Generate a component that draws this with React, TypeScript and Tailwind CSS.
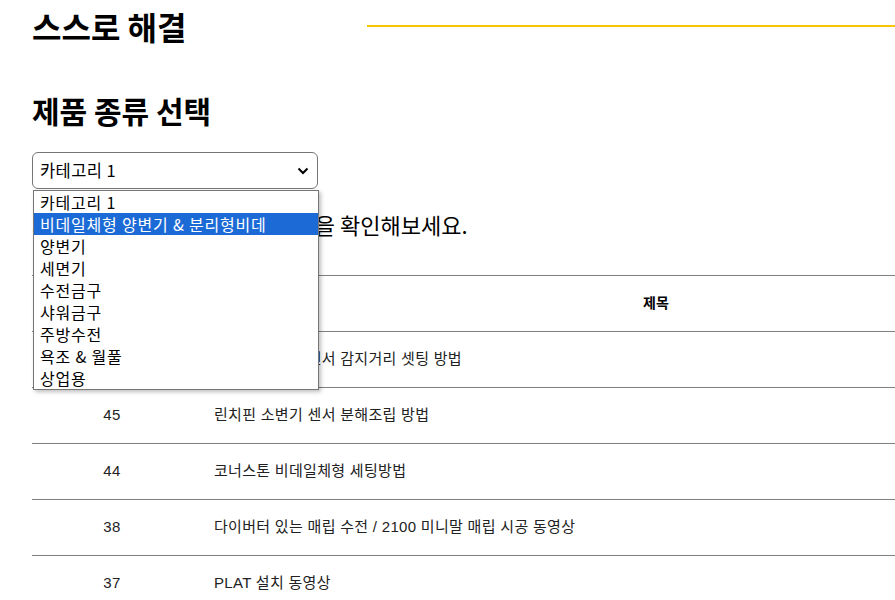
import React from 'react';

const OPTIONS = ['카테고리 1', '비데일체형 양변기 & 분리형비데', '양변기', '세면기', '수전금구', '샤워금구', '주방수전', '욕조 & 월풀', '상업용'];

const ROWS = [
  { no: 46, title: '린치핀 소변기 센서 감지거리 셋팅 방법' },
  { no: 45, title: '린치핀 소변기 센서 분해조립 방법' },
  { no: 44, title: '코너스톤 비데일체형 세팅방법' },
  { no: 38, title: '다이버터 있는 매립 수전 / 2100 미니말 매립 시공 동영상' },
  { no: 37, title: 'PLAT 설치 동영상' },
];

const kr = { fontFamily: '"Noto Sans CJK KR", sans-serif' };
const body = { fontFamily: '"Liberation Sans", "Noto Sans CJK KR", sans-serif' };

export default function App() {
  return (
    <div className="relative h-screen w-screen overflow-hidden bg-white text-black" style={kr}>
      <div className="pl-8">
        {/* page title */}
        <div className="flex items-center pt-[6px]">
          <h1 className="w-[335px] shrink-0 text-[32px] font-bold leading-[40px]">스스로 해결</h1>
          <div className="h-[2px] flex-1 bg-[#f7c600]" />
        </div>

        <h2 className="mt-[44px] text-[30px] font-bold leading-[40px]">제품 종류 선택</h2>

        <div className="mt-[22px] flex h-[37px] w-[286px] items-center justify-between rounded-md border border-[#767676] px-[7px] text-[16.5px] tracking-[0.4px]">
          <span>카테고리 1</span>
          <svg width="12" height="8" viewBox="0 0 12 8" className="mr-[1px]">
            <path d="M1.5 1.5 L6 6 L10.5 1.5" fill="none" stroke="#000" strokeWidth="2" />
          </svg>
        </div>

        <p className="mt-[20px] text-[22px] leading-[30px]">제품 종류를 선택하여 해결 방법을 확인해보세요.</p>

        <table className="mt-[36px] w-[1088px] border-collapse" style={body}>
          <thead>
            <tr className="h-[56px] border-y border-[#808080] text-[14px]">
              <th className="w-[160px] font-bold">번호</th>
              <th className="font-bold">제목</th>
            </tr>
          </thead>
          <tbody>
            {ROWS.map(r => (
              <tr key={r.no} className="h-[56px] border-b border-[#808080] text-[15px] tracking-[0.3px] text-[#222]">
                <td className="text-center">{r.no}</td>
                <td className="pl-[22px]">{r.title}</td>
              </tr>
            ))}
          </tbody>
        </table>
      </div>

      {/* open select list */}
      <div className="absolute left-[33px] top-[190px] w-[286px] border border-[#767676] bg-white text-[16px] tracking-[0.8px] shadow-[2px_2px_4px_rgba(0,0,0,0.25)]">
        {OPTIONS.map((o, i) => (
          <div key={o}
            className={i === 1 ? 'h-[22px] bg-[#1b6ad6] pl-[6px] leading-[22px] text-white' : 'h-[22px] pl-[6px] leading-[22px]'}>
            {o}
          </div>
        ))}
      </div>
    </div>
  );
}
